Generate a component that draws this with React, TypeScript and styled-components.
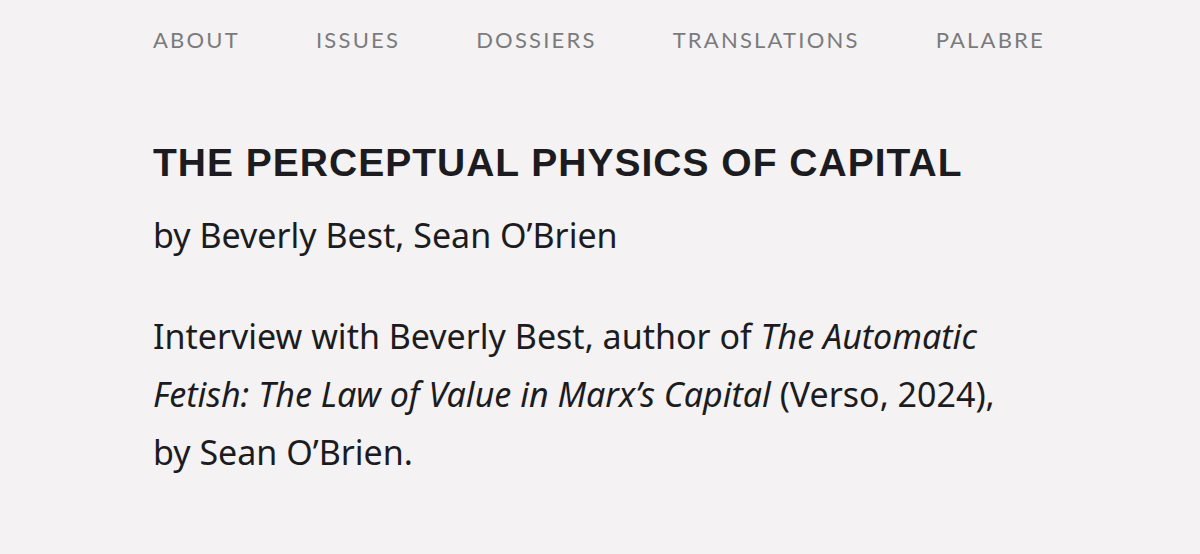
import styled, { createGlobalStyle } from "styled-components";

const GlobalStyle = createGlobalStyle`
  html, body {
    margin: 0;
    padding: 0;
    background: #f4f2f3;
  }
`;

const Page = styled.div`
  width: 1200px;
  height: 554px;
  background: #f4f2f3;
  overflow: hidden;
  padding: 0 153px;
  box-sizing: border-box;
`;

const Nav = styled.nav`
  display: flex;
  justify-content: space-between;
  width: 892px;
  padding-top: 27px;
`;

const NavLink = styled.a`
  font-family: "Lato", "Open Sans", sans-serif;
  font-size: 22px;
  line-height: 26px;
  letter-spacing: 2.2px;
  color: #7b7b7d;
  text-decoration: none;
  text-transform: uppercase;
`;

const Article = styled.article`
  padding-top: 86px;
`;

const Title = styled.h1`
  margin: 0;
  font-family: "Liberation Sans", Arial, sans-serif;
  font-weight: 700;
  font-size: 39px;
  line-height: 48px;
  letter-spacing: 1px;
  color: #1b1b20;
`;

const Byline = styled.p`
  margin: 26px 0 0;
  font-family: "Noto Sans", sans-serif;
  font-size: 34px;
  line-height: 44px;
  color: #1b1b20;
`;

const Summary = styled.p`
  margin: 50px 0 0;
  width: 870px;
  font-family: "Noto Sans", sans-serif;
  font-size: 34px;
  line-height: 58px;
  color: #1b1b20;

  em {
    font-style: italic;
  }
`;

const links = ["About", "Issues", "Dossiers", "Translations", "Palabre"];

export default function App() {
  return (
    <>
      <GlobalStyle />
      <Page>
        <Nav>
          {links.map((l) => (
            <NavLink key={l} href="#">
              {l}
            </NavLink>
          ))}
        </Nav>
        <Article>
          <Title>THE PERCEPTUAL PHYSICS OF CAPITAL</Title>
          <Byline>by Beverly Best, Sean O’Brien</Byline>
          <Summary>
            Interview with Beverly Best, author of <em>The Automatic Fetish: The Law of Value in Marx’s Capital</em>{" "}
            (Verso, 2024), by Sean O’Brien.
          </Summary>
        </Article>
      </Page>
    </>
  );
}
